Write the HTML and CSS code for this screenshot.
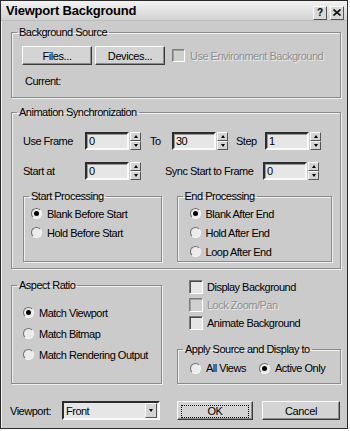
FILE: index.html
```html
<!DOCTYPE html>
<html lang="en">
<head>
    <meta charset="UTF-8">
    <meta name="viewport" content="width=device-width, initial-scale=1.0">
    <title>Viewport Background</title>
    <link rel="stylesheet" href="styles.css">
</head>
<body>
    <div class="window">
        <div class="titlebar">
            <span class="title">Viewport Background</span>
            <div class="title-buttons">
                <span class="tbtn tbtn-help">?</span>
                <span class="tbtn">
                    <svg width="8" height="7" viewBox="0 0 8 7"><path d="M0.5 0.5 L7.5 6.5 M7.5 0.5 L0.5 6.5" stroke="#111" stroke-width="1.6"/></svg>
                </span>
            </div>
        </div>

        <div class="client">
            <fieldset class="group source">
                <legend>Background Source</legend>
                <div class="source-row">
                    <button class="btn btn-files">Files...</button>
                    <button class="btn btn-devices">Devices...</button>
                    <label class="check disabled"><span class="box"></span>Use Environment Background</label>
                </div>
                <div class="current">Current:</div>
            </fieldset>

            <fieldset class="group sync">
                <legend>Animation Synchronization</legend>
                <div class="sync-body">
                    <div class="sync-row">
                        <span class="lbl lbl-first">Use Frame</span>
                        <div class="spinner"><span class="field">0</span><span class="arrows"><span class="up"></span><span class="down"></span></span></div>
                        <span class="lbl lbl-to">To</span>
                        <div class="spinner"><span class="field">30</span><span class="arrows"><span class="up"></span><span class="down"></span></span></div>
                        <span class="lbl lbl-step">Step</span>
                        <div class="spinner"><span class="field">1</span><span class="arrows"><span class="up"></span><span class="down"></span></span></div>
                    </div>
                    <div class="sync-row">
                        <span class="lbl lbl-first">Start at</span>
                        <div class="spinner"><span class="field">0</span><span class="arrows"><span class="up"></span><span class="down"></span></span></div>
                        <span class="lbl lbl-sync">Sync Start to Frame</span>
                        <div class="spinner"><span class="field">0</span><span class="arrows"><span class="up"></span><span class="down"></span></span></div>
                    </div>
                    <div class="processing">
                        <fieldset class="group start-proc">
                            <legend>Start Processing</legend>
                            <div class="radio-list">
                                <label class="option"><span class="radio checked"></span>Blank Before Start</label>
                                <label class="option"><span class="radio"></span>Hold Before Start</label>
                            </div>
                        </fieldset>
                        <fieldset class="group end-proc">
                            <legend>End Processing</legend>
                            <div class="radio-list">
                                <label class="option"><span class="radio checked"></span>Blank After End</label>
                                <label class="option"><span class="radio"></span>Hold After End</label>
                                <label class="option"><span class="radio"></span>Loop After End</label>
                            </div>
                        </fieldset>
                    </div>
                </div>
            </fieldset>

            <div class="lower">
                <fieldset class="group aspect">
                    <legend>Aspect Ratio</legend>
                    <div class="aspect-list">
                        <label class="option"><span class="radio checked"></span>Match Viewport</label>
                        <label class="option"><span class="radio"></span>Match Bitmap</label>
                        <label class="option"><span class="radio"></span>Match Rendering Output</label>
                    </div>
                </fieldset>
                <div class="right-col">
                    <div class="checks">
                        <label class="check"><span class="box"></span>Display Background</label>
                        <label class="check disabled"><span class="box"></span>Lock Zoom/Pan</label>
                        <label class="check"><span class="box"></span>Animate Background</label>
                    </div>
                    <fieldset class="group apply">
                        <legend>Apply Source and Display to</legend>
                        <div class="apply-row">
                            <label class="option opt-all"><span class="radio"></span>All Views</label>
                            <label class="option"><span class="radio checked"></span>Active Only</label>
                        </div>
                    </fieldset>
                </div>
            </div>

            <div class="footer">
                <span class="viewport-lbl">Viewport:</span>
                <div class="combo">
                    <span class="combo-text">Front</span>
                    <span class="combo-btn down"></span>
                </div>
                <button class="btn btn-ok"><span class="focus">OK</span></button>
                <button class="btn btn-cancel">Cancel</button>
            </div>
        </div>
    </div>
</body>
</html>
```

FILE: styles.css
```css
body {
    margin: 0;
    padding: 0;
    background-color: #fff;
    font-family: "Liberation Sans", Arial, sans-serif;
    font-size: 11px;
    letter-spacing: -0.5px;
    color: #000;
}

.window {
    width: 348px;
    height: 429px;
    box-sizing: border-box;
    border: 1px solid #2a2a2a;
    background-color: #cbcbcb;
    box-shadow: inset 1px 1px 0 #f2f2f2;
}

/* title bar */
.titlebar {
    height: 20px;
    display: flex;
    align-items: center;
    justify-content: space-between;
    padding: 0 3px 0 5px;
    background: linear-gradient(#f2f2f2, #d2d2d2);
    border-bottom: 1px solid #bdbdbd;
    box-sizing: border-box;
}

.title {
    font-size: 13px;
    font-weight: bold;
    letter-spacing: -0.2px;
}

.title-buttons {
    display: flex;
    gap: 3px;
    margin-top: 4px;
}

.tbtn {
    width: 12px;
    height: 12px;
    display: flex;
    align-items: center;
    justify-content: center;
    background: #d8d8d8;
    border: 1px solid;
    border-color: #fff #555 #555 #fff;
    font-weight: bold;
    font-size: 10px;
    letter-spacing: 0;
    line-height: 1;
}

/* client area */
.client {
    padding: 0 6px 0 10px;
}

.group {
    margin: 0;
    padding: 0;
    min-width: 0;
    border: 1px solid #8a8a8a;
    box-shadow: 1px 1px 0 #f0f0f0, inset 1px 1px 0 #f0f0f0;
}

.group legend {
    margin-left: 5px;
    padding: 0 2px;
    line-height: 13px;
}

.btn {
    font-family: "Liberation Sans", Arial, sans-serif;
    font-size: 11px;
    letter-spacing: -0.4px;
    color: #000;
    height: 19px;
    padding: 0;
    background-color: #d4d4d4;
    border: 1px solid;
    border-color: #fafafa #3a3a3a #3a3a3a #fafafa;
    box-shadow: inset -1px -1px 0 #8c8c8c;
}

/* background source */
.source {
    margin-top: 5px;
}

.source-row {
    display: flex;
    align-items: center;
    padding: 7px 0 0 10px;
}

.btn-files,
.btn-devices {
    width: 70px;
}

.btn-devices {
    margin-left: 3px;
    margin-right: 7px;
}

.check {
    display: flex;
    align-items: center;
    gap: 5px;
    height: 18px;
}

.box {
    width: 11px;
    height: 11px;
    background-color: #e6e6e6;
    border: 1px solid;
    border-color: #7a7a7a #fff #fff #7a7a7a;
    box-shadow: inset 1px 1px 0 #4a4a4a;
}

.check.disabled {
    color: #8e8e8e;
    text-shadow: 1px 1px 0 #ececec;
}

.check.disabled .box {
    background-color: #cfcfcf;
    box-shadow: inset 1px 1px 0 #a0a0a0;
}

.current {
    margin: 10px 0 0 13px;
    line-height: 13px;
    padding-bottom: 9px;
}

/* animation sync */
.sync {
    margin-top: 8px;
}

.sync-body {
    padding: 13px 8px 6px 11px;
}

.sync-row {
    display: flex;
    align-items: center;
    height: 18px;
}

.sync-row + .sync-row {
    margin-top: 12px;
}

.lbl-first {
    width: 62px;
}

.lbl-to {
    margin-left: 9px;
    width: 22px;
}

.lbl-step {
    margin-left: 8px;
    width: 29px;
}

.lbl-sync {
    margin-left: 24px;
    width: 98px;
}

.spinner {
    display: flex;
}

.field {
    width: 38px;
    height: 14px;
    padding-left: 2px;
    line-height: 14px;
    background-color: #e6e6e6;
    border: 2px solid;
    border-color: #2c2c2c #fafafa #fafafa #2c2c2c;
    box-shadow: 1px 1px 0 #9a9a9a inset;
}

.arrows {
    display: flex;
    flex-direction: column;
    width: 11px;
    height: 18px;
    margin-left: 1px;
}

.arrows > span,
.combo-btn {
    flex: 1;
    display: flex;
    align-items: center;
    justify-content: center;
    background-color: #d4d4d4;
    border: 1px solid;
    border-color: #fafafa #555 #555 #fafafa;
}

.up::after,
.down::after {
    content: "";
    border-left: 2px solid transparent;
    border-right: 2px solid transparent;
}

.up::after {
    border-bottom: 3px solid #000;
}

.down::after {
    border-top: 3px solid #000;
}

.processing {
    display: flex;
    gap: 15px;
    margin-top: 10px;
}

.start-proc {
    width: 139px;
    box-sizing: border-box;
}

.end-proc {
    width: 156px;
    box-sizing: border-box;
}

.radio-list {
    padding-top: 1px;
}

.start-proc .radio-list {
    padding-left: 7px;
}

.end-proc .radio-list {
    padding-left: 12px;
}

.option {
    display: flex;
    align-items: center;
    gap: 5px;
    height: 19px;
}

.radio {
    position: relative;
    width: 11px;
    height: 11px;
    box-sizing: border-box;
    border-radius: 50%;
    border: 1px solid;
    border-color: #6e6e6e #f6f6f6 #f6f6f6 #6e6e6e;
    background-color: #ebebeb;
}

.radio.checked::after {
    content: "";
    position: absolute;
    left: 2px;
    top: 2px;
    width: 5px;
    height: 5px;
    border-radius: 50%;
    background-color: #000;
}

/* lower area */
.lower {
    display: flex;
    gap: 15px;
    margin-top: 10px;
}

.aspect {
    width: 151px;
    box-sizing: border-box;
}

.aspect-list {
    padding: 10px 0 0 11px;
}

.aspect-list .option {
    height: 21px;
}

.right-col {
    width: 164px;
}

.checks {
    margin-top: -1px;
    padding-left: 12px;
}

.checks .check {
    gap: 4px;
}

.checks .box {
    width: 12px;
    height: 12px;
}

.apply {
    margin-top: 11px;
}

.apply-row {
    display: flex;
    padding: 2px 0 5px 12px;
}

.apply-row .option {
    height: 20px;
}

.opt-all {
    width: 69px;
}

/* footer */
.footer {
    display: flex;
    align-items: center;
    margin-top: 17px;
}

.viewport-lbl {
    width: 52px;
    margin-left: -1px;
}

.combo {
    display: flex;
    align-items: center;
    width: 98px;
    height: 19px;
    box-sizing: border-box;
    background-color: #e6e6e6;
    border: 2px solid;
    border-color: #2c2c2c #fafafa #fafafa #2c2c2c;
    padding: 0 1px 0 2px;
}

.combo-text {
    flex: 1;
}

.combo-btn {
    flex: none;
    width: 10px;
    height: 13px;
}

.btn-ok {
    width: 76px;
    margin-left: 17px;
    padding: 3px;
}

.focus {
    display: block;
    height: 11px;
    line-height: 11px;
    border: 1px dotted #000;
}

.btn-cancel {
    width: 78px;
    margin-left: 9px;
}
```
